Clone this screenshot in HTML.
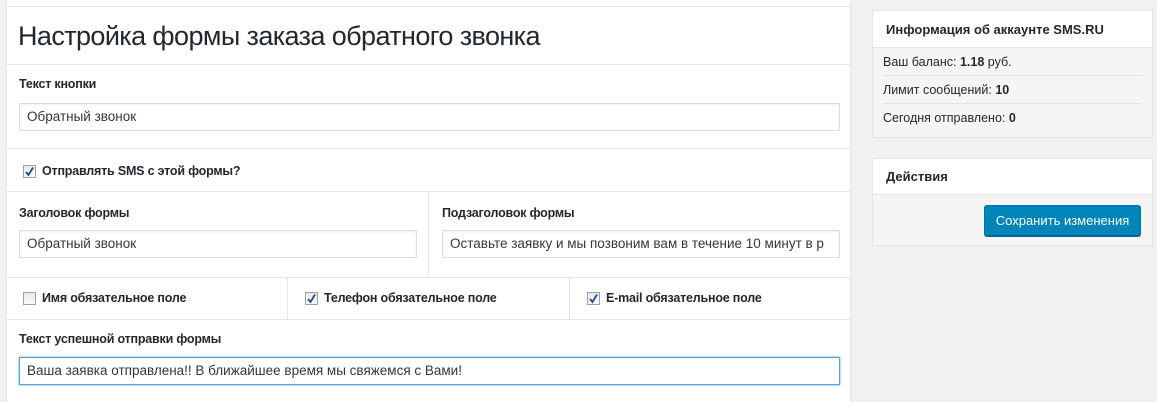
<!DOCTYPE html>
<html><head><meta charset="utf-8"><style>
*{box-sizing:border-box;margin:0;padding:0}
body{width:1157px;height:402px;background:#f1f1f1;font-family:"Liberation Sans","Noto Sans CJK SC",sans-serif;font-size:13px;color:#23282d;position:relative;overflow:hidden}
.a{position:absolute}
.main{left:6px;top:0;width:845px;height:402px;background:#fff;border-right:1px solid #e5e5e5;border-left:1px solid #e5e5e5}
.hl{position:absolute;height:1px;background:#e5e5e5}
.vl{position:absolute;width:1px;background:#e5e5e5}
.lbl{font-weight:bold;font-size:12.5px;color:#23282d;letter-spacing:-0.2px}
.inp{position:absolute;border:1px solid #ddd;box-shadow:inset 0 1px 2px rgba(0,0,0,.07);height:28px;padding:0 7px;line-height:26px;font-size:13.5px;color:#32373c;white-space:nowrap;overflow:hidden;background:#fff}
.cb{position:absolute;width:13px;height:13px;border:1px solid #a0a0a0;background:linear-gradient(#e8e8e8,#fafafa)}
.cb svg{position:absolute;left:0;top:0}
.ct{position:absolute;font-weight:bold;font-size:12.5px;letter-spacing:-0.2px}
.box{position:absolute;left:872px;width:281px;background:#f5f5f5;border:1px solid #e5e5e5}
.bh{background:#fff;border-bottom:1px solid #e5e5e5;font-weight:bold;font-size:13px;padding-left:13px}
.row{margin:0 10px;border-bottom:1px solid #e1e1e1;height:28px;line-height:28px;font-size:12.5px;padding-left:0}
</style></head><body>
<div class="a main"></div>
<div class="hl" style="left:6px;top:6px;width:845px"></div>
<div class="a" style="left:18px;top:21px;font-size:27px;font-weight:300;color:#23282d;letter-spacing:-0.6px">Настройка формы заказа обратного звонка</div>
<div class="hl" style="left:6px;top:64px;width:845px"></div>
<div class="a lbl" style="left:19px;top:77px">Текст кнопки</div>
<div class="inp" style="left:19px;top:103px;width:821px">Обратный звонок</div>
<div class="hl" style="left:6px;top:148px;width:845px"></div>
<div class="cb" style="left:23px;top:165px"><svg width="11" height="11"><path d="M2 6l2.5 3L9 1.5" stroke="#1e4b9b" stroke-width="1.8" fill="none"/></svg></div>
<div class="ct" style="left:42px;top:164px">Отправлять SMS с этой формы?</div>
<div class="hl" style="left:6px;top:191px;width:845px"></div>
<div class="vl" style="left:428px;top:191px;height:86px"></div>
<div class="a lbl" style="left:19px;top:206px">Заголовок формы</div>
<div class="inp" style="left:19px;top:230px;width:398px">Обратный звонок</div>
<div class="a lbl" style="left:442px;top:206px">Подзаголовок формы</div>
<div class="inp" style="left:442px;top:230px;width:398px">Оставьте заявку и мы позвоним вам в течение 10 минут в р</div>
<div class="hl" style="left:6px;top:277px;width:845px"></div>
<div class="vl" style="left:287px;top:277px;height:42px"></div>
<div class="vl" style="left:569px;top:277px;height:42px"></div>
<div class="cb" style="left:23px;top:292px"></div>
<div class="ct" style="left:42px;top:291px">Имя обязательное поле</div>
<div class="cb" style="left:305px;top:292px"><svg width="11" height="11"><path d="M2 6l2.5 3L9 1.5" stroke="#1e4b9b" stroke-width="1.8" fill="none"/></svg></div>
<div class="ct" style="left:324px;top:291px">Телефон обязательное поле</div>
<div class="cb" style="left:587px;top:292px"><svg width="11" height="11"><path d="M2 6l2.5 3L9 1.5" stroke="#1e4b9b" stroke-width="1.8" fill="none"/></svg></div>
<div class="ct" style="left:606px;top:291px">E-mail обязательное поле</div>
<div class="hl" style="left:6px;top:319px;width:845px"></div>
<div class="a lbl" style="left:19px;top:332px">Текст успешной отправки формы</div>
<div class="inp" style="left:19px;top:357px;width:821px;border-color:#5b9dd9;box-shadow:0 0 2px rgba(30,140,190,.8)">Ваша заявка отправлена!! В ближайшее время мы свяжемся с Вами!</div>

<div class="box" style="top:10px;height:128px">
<div class="bh" style="height:37px;line-height:37px">Информация об аккаунте SMS.RU</div>
<div class="row">Ваш баланс: <b>1.18</b> руб.</div>
<div class="row">Лимит сообщений: <b>10</b></div>
<div class="row" style="border:none">Сегодня отправлено: <b>0</b></div>
</div>
<div class="box" style="top:158px;height:88px">
<div class="bh" style="height:36px;line-height:36px">Действия</div>
<div class="a" style="left:111px;top:46px;width:157px;height:31px;background:#0085ba;border:1px solid #0073aa;border-bottom-color:#006799;border-radius:3px;box-shadow:0 1px 0 #006799;color:#fff;font-size:13px;line-height:29px;text-align:center">Сохранить изменения</div>
</div>
</body></html>
